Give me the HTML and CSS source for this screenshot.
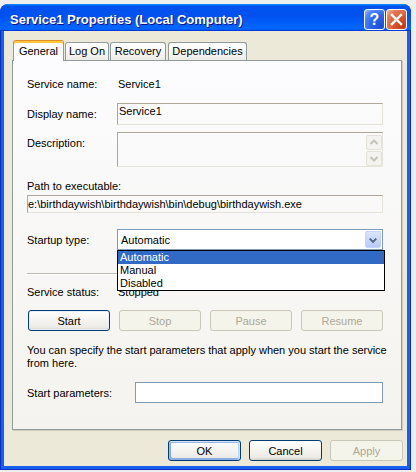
FILE: index.html
```html
<!DOCTYPE html>
<html>
<head>
<meta charset="utf-8">
<title>Service1 Properties (Local Computer)</title>
<link rel="stylesheet" href="styles.css">
</head>
<body>
<div class="window">
  <div class="titlebar">
    <span class="title">Service1 Properties (Local Computer)</span>
    <div class="tb-buttons">
      <span class="tb-btn help">?</span>
      <span class="tb-btn close"><svg width="19" height="19" viewBox="0 0 19 19"><path d="M5 5 L14 14 M14 5 L5 14" stroke="#fff" stroke-width="2.4" stroke-linecap="square"/></svg></span>
    </div>
  </div>
  <div class="frame">
    <div class="client">
      <div class="tabs">
        <div class="tab active t-general">General</div>
        <div class="tab t-logon">Log On</div>
        <div class="tab t-recovery">Recovery</div>
        <div class="tab t-deps">Dependencies</div>
      </div>
      <div class="panel">
        <div class="row r-name"><span class="label">Service name:</span><span class="value">Service1</span></div>
        <div class="row r-display"><span class="label">Display name:</span><div class="edit display">Service1</div></div>
        <div class="row r-desc"><span class="label">Description:</span>
          <div class="edit desc">
            <div class="scroll">
              <span class="sbtn"><svg width="14" height="13" viewBox="0 0 14 13"><polyline points="3.5,8 7,4.5 10.5,8" fill="none" stroke="#c5c3b8" stroke-width="2"/></svg></span>
              <span class="sbtn"><svg width="14" height="13" viewBox="0 0 14 13"><polyline points="3.5,5 7,8.5 10.5,5" fill="none" stroke="#c5c3b8" stroke-width="2"/></svg></span>
            </div>
          </div>
        </div>
        <div class="path-label">Path to executable:</div>
        <div class="edit path">e:\birthdaywish\birthdaywish\bin\debug\birthdaywish.exe</div>
        <div class="row r-startup"><span class="label">Startup type:</span>
          <div class="combo">
            <span class="combo-text">Automatic</span>
            <span class="combo-btn"><svg width="15" height="16" viewBox="0 0 15 16"><polyline points="4,6.5 7.5,10 11,6.5" fill="none" stroke="#4d6185" stroke-width="2"/></svg></span>
            <ul class="listbox">
              <li class="sel">Automatic</li>
              <li>Manual</li>
              <li>Disabled</li>
            </ul>
          </div>
        </div>
        <div class="separator"></div>
        <div class="row r-status"><span class="label">Service status:</span><span class="value">Stopped</span></div>
        <div class="svc-buttons">
          <button class="btn svc focus">Start</button>
          <button class="btn svc" disabled>Stop</button>
          <button class="btn svc" disabled>Pause</button>
          <button class="btn svc" disabled>Resume</button>
        </div>
        <p class="hint">You can specify the start parameters that apply when you start the service<br>from here.</p>
        <div class="row r-params"><span class="label wide">Start parameters:</span><div class="edit params"></div></div>
      </div>
      <div class="dialog-buttons">
        <button class="btn dlg default">OK</button>
        <button class="btn dlg">Cancel</button>
        <button class="btn dlg" disabled>Apply</button>
      </div>
    </div>
  </div>
</div>
</body>
</html>
```

FILE: styles.css
```css
html, body {
  margin: 0;
  padding: 0;
}
body {
  background: #eeeeee;
  font-family: "Liberation Sans", Arial, sans-serif;
  font-size: 11px;
  color: #000;
  width: 416px;
  height: 472px;
  overflow: hidden;
}
.window {
  margin-top: 4px;
  width: 411px;
  height: 466px;
  display: flex;
  flex-direction: column;
  border-radius: 8px 8px 0 0;
  overflow: hidden;
  background: #0831d9;
}
.titlebar {
  flex: none;
  height: 27px;
  box-sizing: border-box;
  display: flex;
  align-items: flex-start;
  padding: 0 4px 0 10px;
  background: linear-gradient(180deg, #0997ff, #0053ee 8%, #0050ee 40%, #0066ff 88%, #0066ff 93%, #005bff 95%, #003dd7 96%, #003dd7);
}
.title {
  flex: 1;
  margin-top: 8px;
  color: #fff;
  font-weight: bold;
  font-size: 13px;
  line-height: 15px;
  white-space: nowrap;
  text-shadow: 1px 1px #0f1089;
}
.tb-buttons {
  display: flex;
  gap: 1px;
  margin-top: 5px;
}
.tb-btn {
  width: 21px;
  height: 21px;
  box-sizing: border-box;
  border: 1px solid #fff;
  border-radius: 3px;
  display: flex;
  align-items: center;
  justify-content: center;
  color: #fff;
}
.help {
  background: radial-gradient(circle at 85% 85%, #1c4fd8 0%, #2a63ee 45%, #4c86f8 75%, #9fbdfb 100%);
  font-weight: bold;
  font-size: 16px;
  line-height: 19px;
}
.close {
  background: radial-gradient(circle at 85% 85%, #c43a10 0%, #dc5a2c 45%, #e77b58 75%, #f6bda8 100%);
}
.frame {
  flex: 1;
  display: flex;
  border: 1px solid #0a2fc2;
  border-top: none;
  padding: 0 3px 3px;
  background: #1660f0;
}
.client {
  flex: 1;
  display: flex;
  flex-direction: column;
  background: #ece9d8;
  padding: 9px 4px 0 8px;
}
.tabs {
  display: flex;
  align-items: flex-end;
  height: 20px;
  padding-left: 1px;
  position: relative;
  z-index: 2;
}
.tab {
  height: 18px;
  box-sizing: border-box;
  border: 1px solid #919b9c;
  border-bottom: none;
  border-radius: 3px 3px 0 0;
  background: linear-gradient(180deg, #ffffff, #fafaf9 40%, #ecebe6);
  text-align: center;
  line-height: 17px;
  margin-left: 1px;
}
.tab.active {
  height: 21px;
  margin-left: 0;
  margin-bottom: -1px;
  background: #fcfcfe;
  border-top: 1px solid #e68b2c;
  box-shadow: inset 0 2px 0 #ffc73c;
  line-height: 20px;
}
.t-general { width: 51px; }
.t-logon { width: 44px; }
.t-recovery { width: 56px; }
.t-deps { width: 79px; margin-left: 2px; }
.panel {
  position: relative;
  z-index: 1;
  width: 390px;
  height: 370px;
  box-sizing: border-box;
  border: 1px solid #919b9c;
  box-shadow: 1px 1px 0 #d0cebf;
  background: linear-gradient(180deg, #fcfcfe, #f4f3ee);
  padding: 0 18px 0 14px;
  display: flex;
  flex-direction: column;
}
.row {
  display: flex;
  align-items: center;
}
.label {
  flex: none;
  width: 90px;
  line-height: 14px;
}
.label.wide {
  width: 108px;
}
.value {
  line-height: 14px;
  padding-left: 1px;
}
.r-name {
  margin-top: 16px;
  height: 14px;
}
.r-display {
  margin-top: 12px;
  height: 22px;
}
.edit {
  flex: 1;
  box-sizing: border-box;
  border: 1px solid;
  border-color: #aca899 #e6e4da #e6e4da #aca899;
}
.edit.display {
  height: 22px;
  line-height: 14px;
  padding-left: 1px;
}
.r-desc {
  margin-top: 7px;
  height: 35px;
  align-items: flex-start;
}
.r-desc .label {
  padding-top: 4px;
}
.edit.desc {
  height: 35px;
  display: flex;
  justify-content: flex-end;
  align-items: flex-start;
}
.scroll {
  display: flex;
  flex-direction: column;
  gap: 1px;
  margin-top: 2px;
}
.sbtn {
  width: 16px;
  height: 15px;
  box-sizing: border-box;
  border: 1px solid #e3e1d8;
  border-radius: 2px;
  background: #f4f3ef;
  display: flex;
  align-items: center;
  justify-content: center;
}
.path-label {
  margin-top: 12px;
  line-height: 14px;
}
.edit.path {
  flex: none;
  margin-top: 2px;
  height: 18px;
  line-height: 16px;
  white-space: nowrap;
  overflow: hidden;
}
.r-startup {
  margin-top: 16px;
  height: 21px;
}
.combo {
  position: relative;
  flex: 1;
  height: 21px;
  box-sizing: border-box;
  border: 1px solid #7f9db9;
  background: #fff;
  display: flex;
  align-items: center;
}
.combo-text {
  flex: 1;
  padding-left: 3px;
  line-height: 14px;
}
.combo-btn {
  width: 16px;
  height: 17px;
  box-sizing: border-box;
  margin-right: 1px;
  border: 1px solid #c3d3fd;
  border-radius: 2px;
  background: linear-gradient(180deg, #dbe5fd, #b6c9f6);
  display: flex;
  align-items: center;
  justify-content: center;
}
.listbox {
  position: absolute;
  top: calc(100% + 1px);
  left: -1px;
  width: 268px;
  box-sizing: border-box;
  margin: 0;
  padding: 0;
  list-style: none;
  border: 1px solid #000;
  background: #fff;
  z-index: 5;
}
.listbox li {
  height: 13px;
  line-height: 13px;
  padding-left: 2px;
}
.listbox li.sel {
  background: #316ac5;
  color: #fff;
}
.separator {
  margin-top: 23px;
  height: 1px;
  background: #bcbab0;
  border-bottom: 1px solid #fff;
}
.r-status {
  margin-top: 10px;
  height: 14px;
}
.svc-buttons {
  display: flex;
  gap: 9px;
  margin-top: 11px;
  padding-left: 1px;
}
.btn {
  font-family: inherit;
  font-size: 11px;
  height: 21px;
  box-sizing: border-box;
  padding: 0;
  margin: 0;
  border: 1px solid #003c74;
  border-radius: 3px;
  background: linear-gradient(180deg, #ffffff, #ecebe6 86%, #d6d0c5);
  color: #000;
}
.btn:disabled {
  border-color: #c9c7ba;
  background: #f5f4ea;
  color: #aca899;
}
.btn.svc {
  width: 82px;
}
.btn.dlg {
  width: 73px;
}
.btn.focus {
  box-shadow: inset 0 0 0 1px #e8eefa;
}
.btn.default {
  box-shadow: inset -1px 1px #cee7ff, inset 1px 2px #98b8ea, inset -2px 0 #bcd4f6, inset -1px -2px #89ade4, inset 2px -2px #89ade4;
}
.hint {
  margin: 13px 0 0 0;
  line-height: 13px;
  white-space: nowrap;
}
.r-params {
  margin-top: 12px;
  height: 21px;
}
.edit.params {
  height: 21px;
  border: 1px solid #7f9db9;
  background: #fff;
}
.dialog-buttons {
  display: flex;
  justify-content: flex-end;
  gap: 8px;
  margin-top: 10px;
}
```
